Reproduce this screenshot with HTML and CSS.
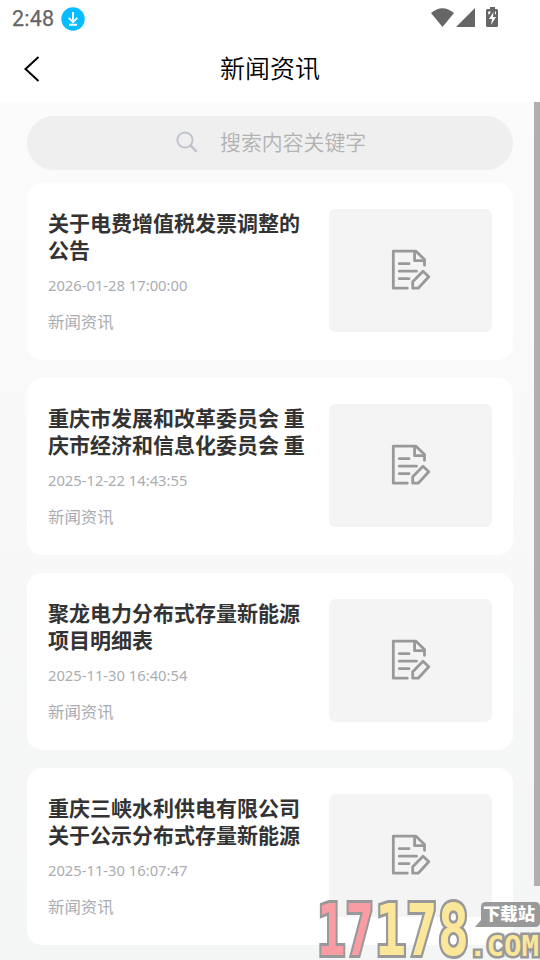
FILE: index.html
```html
<!DOCTYPE html>
<html lang="zh-CN">
<head>
<meta charset="utf-8">
<meta name="viewport" content="width=device-width, initial-scale=1">
<title>新闻资讯</title>
<link rel="stylesheet" href="styles.css">
</head>
<body>
<svg class="defs" aria-hidden="true">
  <symbol id="note" viewBox="0 0 40 42">
    <g fill="none" stroke="#999" stroke-width="2.8" stroke-linejoin="round" stroke-linecap="round">
      <path d="M16.3 39.2H2.3V2.2H25L33.5 10.5V16.3"/>
      <path d="M23.6 2.5V11.7H33"/>
      <path d="M8.3 14.7H18M8.3 22.2H25.5M8.3 29.7H18"/>
      <path d="M21.7 39.2V32.7L32 22.2L37.8 27.7L27.2 39.2Z"/>
    </g>
  </symbol>
</svg>
<header class="status">
  <span class="clock">2:48</span>
  <svg class="download" viewBox="0 0 24 24"><circle cx="12" cy="12" r="11.7" fill="#08bdff"/><path d="M12 5v10M7.700 10.800l4.300 4.300 4.300-4.300M8 17.800h8" fill="none" stroke="#fff" stroke-width="1.900"/></svg>
  <svg class="signals" viewBox="0 0 68 22"><g fill="#666"><path d="M0 6Q11.500-3.500 23 6L11.500 20Z"/><path d="M44 1V20H25Z"/><path d="M59 0h5v2h2q1 0 1 1.500V18.500q0 1.500-1.500 1.500h-9q-1.500 0-1.500-1.500V3.500Q55 2 56 2h3Z"/></g><path d="M62.500 5L58 12h3l-1 6 5-8h-3Z" fill="#fff"/><path d="M57.200 4.500h2.500l-1 2.800h-1.500zM64 4.500h1v2.800h-1z" fill="#fff"/></svg>
</header>
<nav class="navbar">
  <svg class="back" viewBox="0 0 16 26"><path d="M14.500 1L1.500 13L14.500 25" fill="none" stroke="#000" stroke-width="2"/></svg>
  <h1>新闻资讯</h1>
</nav>
<main class="page">
  <div class="search">
    <svg viewBox="0 0 22 22"><g fill="none" stroke="#c0c4cc" stroke-width="2" stroke-linecap="round"><circle cx="9" cy="9" r="7.600"/><path d="M14.500 14.500L20 20" stroke-width="2.500"/></g></svg>
    <span>搜索内容关键字</span>
  </div>
  <article class="card">
    <div class="info"><h2>关于电费增值税发票调整的<br>公告</h2><time>2026-01-28 17:00:00</time><p>新闻资讯</p></div>
    <div class="thumb"><svg><use href="#note"/></svg></div>
  </article>
  <article class="card">
    <div class="info"><h2>重庆市发展和改革委员会 重<br>庆市经济和信息化委员会 重</h2><time>2025-12-22 14:43:55</time><p>新闻资讯</p></div>
    <div class="thumb"><svg><use href="#note"/></svg></div>
  </article>
  <article class="card">
    <div class="info"><h2>聚龙电力分布式存量新能源<br>项目明细表</h2><time>2025-11-30 16:40:54</time><p>新闻资讯</p></div>
    <div class="thumb"><svg><use href="#note"/></svg></div>
  </article>
  <article class="card">
    <div class="info"><h2>重庆三峡水利供电有限公司<br>关于公示分布式存量新能源</h2><time>2025-11-30 16:07:47</time><p>新闻资讯</p></div>
    <div class="thumb"><svg><use href="#note"/></svg></div>
  </article>
  <div class="scrollbar"></div>
</main>
<svg class="watermark" viewBox="0 0 230 70">
  <g class="digits">
    <text class="red" x="7" y="65" textLength="57" lengthAdjust="spacingAndGlyphs">17</text>
    <text class="yellow" x="65" y="65" textLength="94" lengthAdjust="spacingAndGlyphs">178</text>
  </g>
  <path d="M176 12H225Q230 12 230 17V32Q230 37 225 37H176L165 37L171 30V17Q171 12 176 12Z" fill="#999"/>
  <text class="site" x="173" y="30" textLength="52" lengthAdjust="spacingAndGlyphs">下载站</text>
  <text class="com" x="159" y="66" textLength="70" lengthAdjust="spacingAndGlyphs">.COM</text>
</svg>
</body>
</html>
```
FILE: styles.css
```css
* { box-sizing: border-box; }
body {
  margin: 0;
  height: 960px;
  overflow: hidden;
  position: relative;
  background: #fff;
  font-family: "Noto Sans", "Noto Sans CJK SC", sans-serif;
}
h1, h2, p { margin: 0; }
.defs { position: absolute; width: 0; height: 0; }
.status { height: 36px; padding: 0 41px 0 12px; display: flex; align-items: center; }
.clock { font: 400 21.5px/36px Roboto, sans-serif; color: #666; letter-spacing: 0.2px; padding-top: 2px; -webkit-text-stroke: 0.25px #666; }
.download { width: 24px; height: 24px; margin: 1px 0 0 7px; }
.signals { width: 68px; height: 22px; margin: 0 0 0 auto; }
.navbar { height: 66px; display: grid; grid-template-columns: 60px 1fr 60px; align-items: center; }
.back { width: 16px; height: 26px; margin-left: 24px; }
.navbar h1 { text-align: center; font: 350 25px/36px "Noto Sans CJK SC", sans-serif; color: #000; padding-bottom: 4px; }
.page {
  position: relative;
  height: 858px;
  overflow: hidden;
  padding: 14px 27px 0;
  background: linear-gradient(#fbfbfb, #f4f5f5);
}
.search {
  height: 54px;
  margin-bottom: 13px;
  border-radius: 27px;
  background: #efefef;
  display: flex;
  align-items: center;
  padding: 0 0 2px 149px;
  gap: 22px;
}
.search svg { width: 22px; height: 22px; }
.search span { font: 350 20.9px/30px "Noto Sans CJK SC", sans-serif; color: #b2b2b2; padding-bottom: 2px; }
.card {
  height: 177px;
  margin-bottom: 18px;
  padding: 26px 21px;
  border-radius: 15px;
  background: #fff;
  display: flex;
  justify-content: space-between;
}
.info { white-space: nowrap; }
.info h2 { font: 700 21px/27px "Noto Sans CJK SC", sans-serif; color: #333; }
.info time { display: block; margin-top: 11px; font-size: 14.75px; line-height: 22px; color: #aaadb2; }
.info p { margin-top: 13px; font: 400 16.4px/24px "Noto Sans CJK SC", sans-serif; color: #aaadb2; }
.thumb { width: 163px; height: 123px; border-radius: 7px; background: #f4f4f4; display: flex; align-items: center; justify-content: center; padding-bottom: 1px; }
.thumb svg { width: 40px; height: 42px; }
.scrollbar { position: absolute; top: 0; right: 0; width: 6px; height: 784px; background: #b0b0b0; }
.watermark { position: absolute; left: 310px; top: 890px; width: 230px; height: 70px; }
.watermark text { paint-order: stroke; stroke: #999; stroke-linejoin: miter; }
.digits text { font: 700 71px "DejaVu Sans Mono", monospace; stroke-width: 6px; }
.watermark .red { fill: #f99ca4; }
.watermark .yellow, .watermark .com { fill: #fae799; }
.watermark .com { font: 700 28px "DejaVu Sans Mono", monospace; stroke-width: 5px; }
.watermark .site { font: 900 17px "Noto Sans CJK SC", sans-serif; fill: #fff; stroke: none; }
```
